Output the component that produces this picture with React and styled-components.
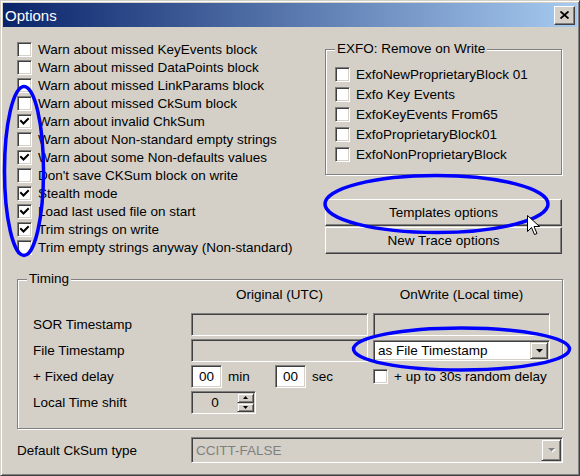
import React from 'react';
import styled, { createGlobalStyle } from 'styled-components';

const Global = createGlobalStyle`
  html, body { margin: 0; padding: 0; background: #d4d0c8; }
  body { font-family: "Liberation Sans", Arial, sans-serif; font-size: 13.5px; color: #000; }
  * { box-sizing: border-box; }
`;

const Window = styled.div`
  position: relative;
  width: 580px;
  height: 476px;
  background: #d4d0c8;
  border: 1px solid;
  border-color: #d4d0c8 #404040 #404040 #d4d0c8;
  box-shadow: inset 1px 1px 0 #fff, inset -1px -1px 0 #808080;
  padding: 2px;
  display: flex;
  flex-direction: column;
`;

const TitleBar = styled.div`
  height: 24px;
  flex: none;
  display: flex;
  align-items: center;
  justify-content: space-between;
  padding: 0 2px 0 2px;
  background: linear-gradient(to right, #0a246a, #a6caf0);
  color: #fff;
  font-size: 15px;
`;

const CloseButton = styled.div`
  width: 21px;
  height: 19px;
  background: #d4d0c8;
  border: 1px solid;
  border-color: #fff #404040 #404040 #fff;
  box-shadow: inset -1px -1px 0 #808080;
  display: flex;
  align-items: center;
  justify-content: center;
`;

const Client = styled.div`
  flex: 1;
  padding: 13px 14px 0 14px;
  display: flex;
  flex-direction: column;
`;

const TopSection = styled.div`
  display: grid;
  grid-template-columns: 308px 237px;
  align-items: start;
`;

const CheckList = styled.div`
  display: flex;
  flex-direction: column;
`;

const CheckRow = styled.label`
  height: ${p => p.$h}px;
  display: flex;
  align-items: center;
  gap: 6px;
  white-space: nowrap;
`;

const Box = styled.span`
  width: 15px;
  height: 15px;
  flex: none;
  border: 1px solid;
  border-color: #808080 #fff #fff #808080;
  box-shadow: inset 1px 1px 0 #404040, inset -1px -1px 0 #d4d0c8;
  background: #fff;
  display: flex;
  align-items: center;
  justify-content: center;
`;

const RightCol = styled.div`
  margin-top: 9px;
  display: flex;
  flex-direction: column;
`;

const GroupBox = styled.div`
  position: relative;
  border: 1px solid #808080;
  box-shadow: inset 1px 1px 0 #fff, 1px 1px 0 #fff;
  padding: ${p => p.$pad};
  margin-top: ${p => p.$mt || 0}px;
`;

const Legend = styled.span`
  position: absolute;
  top: -9px;
  left: ${p => p.$left}px;
  padding: 0 2px;
  line-height: 16px;
  background: #d4d0c8;
  white-space: nowrap;
`;

const ButtonStack = styled.div`
  margin-top: 24px;
  display: flex;
  flex-direction: column;
  gap: 1px;
`;

const Button = styled.div`
  height: 27px;
  background: #d4d0c8;
  border: 1px solid;
  border-color: #fff #404040 #404040 #fff;
  box-shadow: inset -1px -1px 0 #808080;
  display: flex;
  align-items: center;
  justify-content: center;
`;

const TimingGrid = styled.div`
  display: grid;
  grid-template-columns: 153px 177px 177px;
  grid-template-rows: 23px repeat(4, 23px);
  column-gap: 5px;
  row-gap: 3px;
  align-items: center;
`;

const ColHead = styled.div`
  align-self: start;
  line-height: 16px;
  text-align: center;
  grid-column: ${p => p.$col};
`;

const Label = styled.div`
  white-space: nowrap;
`;

const Field = styled.div`
  height: ${p => p.$h || 23}px;
  width: ${p => (p.$w ? `${p.$w}px` : 'auto')};
  flex: none;
  border: 1px solid;
  border-color: #808080 #fff #fff #808080;
  box-shadow: inset 1px 1px 0 #404040, inset -1px -1px 0 #d4d0c8;
  background: ${p => (p.$white ? '#fff' : '#d4d0c8')};
  display: flex;
  align-items: center;
  padding: 1px;
  color: ${p => (p.$disabled ? '#808080' : '#000')};
`;

const FieldText = styled.span`
  flex: 1;
  padding-left: ${p => (p.$center ? 0 : 3)}px;
  white-space: nowrap;
  text-align: ${p => (p.$center ? 'center' : 'left')};
`;

const DropButton = styled.div`
  width: ${p => p.$w}px;
  height: 100%;
  flex: none;
  background: #d4d0c8;
  border: 1px solid;
  border-color: #d4d0c8 #404040 #404040 #d4d0c8;
  box-shadow: inset 1px 1px 0 #fff, inset -1px -1px 0 #808080;
  display: flex;
  align-items: center;
  justify-content: center;
`;

const SpinButtons = styled.div`
  width: 17px;
  height: 100%;
  flex: none;
  display: flex;
  flex-direction: column;
`;

const SpinHalf = styled.div`
  flex: 1;
  background: #d4d0c8;
  border: 1px solid;
  border-color: #d4d0c8 #404040 #404040 #d4d0c8;
  box-shadow: inset 1px 1px 0 #fff, inset -1px -1px 0 #808080;
  display: flex;
  align-items: center;
  justify-content: center;
`;

const InlineRow = styled.div`
  display: flex;
  align-items: center;
  gap: 6px;
`;

const Unit = styled.span`
  width: 41px;
  flex: none;
`;

const DefaultRow = styled.div`
  margin-top: 8px;
  display: grid;
  grid-template-columns: 174px 1fr;
  align-items: center;
`;

const Overlay = styled.svg`
  position: absolute;
  top: -1px;
  left: -1px;
  width: 580px;
  height: 476px;
  pointer-events: none;
`;

const CheckMark = () => (
  <svg width="11" height="11" viewBox="0 0 11 11">
    <polyline points="2,5 4.5,7.5 9,3" fill="none" stroke="#000" strokeWidth="2" strokeLinecap="square" />
  </svg>
);

const Arrow = ({ color = '#000', shadow = false }) => (
  <svg width="9" height="6" viewBox="0 0 9 6">
    {shadow && <path d="M2 2 H9 L5.5 5.5 Z" fill="#fff" />}
    <path d="M1 1 H8 L4.5 4.5 Z" fill={color} />
  </svg>
);

const SmallArrow = ({ up }) => (
  <svg width="5" height="3" viewBox="0 0 5 3">
    {up ? <path d="M0 3 H5 L2.5 0 Z" fill="#000" /> : <path d="M0 0 H5 L2.5 3 Z" fill="#000" />}
  </svg>
);

const Check = ({ checked, h, children }) => (
  <CheckRow $h={h}>
    <Box>{checked && <CheckMark />}</Box>
    <span>{children}</span>
  </CheckRow>
);

const leftItems = [
  ['Warn about missed KeyEvents block', false],
  ['Warn about missed DataPoints block', false],
  ['Warn about missed LinkParams block', false],
  ['Warn about missed CkSum block', false],
  ['Warn about invalid ChkSum', true],
  ['Warn about Non-standard empty strings', false],
  ['Warn about some Non-defaults values', true],
  ["Don't save CKSum block on write", false],
  ['Stealth mode', true],
  ['Load last used file on start', true],
  ['Trim strings on write', true],
  ['Trim empty strings anyway (Non-standard)', false],
];

const exfoItems = [
  'ExfoNewProprietaryBlock 01',
  'Exfo Key Events',
  'ExfoKeyEvents From65',
  'ExfoProprietaryBlock01',
  'ExfoNonProprietaryBlock',
];

export default function App() {
  return (
    <>
      <Global />
      <Window>
        <TitleBar>
          <span>Options</span>
          <CloseButton>
            <svg width="9" height="8" viewBox="0 0 9 8">
              <path d="M0.5 0.5 L8.5 7.5 M8.5 0.5 L0.5 7.5" stroke="#000" strokeWidth="1.8" />
            </svg>
          </CloseButton>
        </TitleBar>
        <Client>
          <TopSection>
            <CheckList>
              {leftItems.map(([t, c]) => (
                <Check key={t} checked={c} h={18}>{t}</Check>
              ))}
            </CheckList>
            <RightCol>
              <GroupBox $pad="14px 8px 10px 9px">
                <Legend $left={9}>EXFO: Remove on Write</Legend>
                {exfoItems.map(t => (
                  <Check key={t} h={20}>{t}</Check>
                ))}
              </GroupBox>
              <ButtonStack>
                <Button>Templates options</Button>
                <Button>New Trace options</Button>
              </ButtonStack>
            </RightCol>
          </TopSection>

          <GroupBox $mt={23} $pad="7px 8px 14px 15px">
            <Legend $left={9}>Timing</Legend>
            <TimingGrid>
              <ColHead $col={2}>Original (UTC)</ColHead>
              <ColHead $col={3}>OnWrite (Local time)</ColHead>

              <Label>SOR Timestamp</Label>
              <Field />
              <Field />

              <Label>File Timestamp</Label>
              <Field />
              <Field $white $h={21}>
                <FieldText>as File Timestamp</FieldText>
                <DropButton $w={18}><Arrow /></DropButton>
              </Field>

              <Label>+ Fixed delay</Label>
              <InlineRow>
                <Field $white $w={31}><FieldText $center>00</FieldText></Field>
                <Unit>min</Unit>
                <Field $white $w={31}><FieldText $center>00</FieldText></Field>
                <Unit>sec</Unit>
              </InlineRow>
              <Check h={23}>+ up to 30s random delay</Check>

              <Label>Local Time shift</Label>
              <InlineRow>
                <Field $w={65}>
                  <FieldText $center>0</FieldText>
                  <SpinButtons>
                    <SpinHalf><SmallArrow up /></SpinHalf>
                    <SpinHalf><SmallArrow /></SpinHalf>
                  </SpinButtons>
                </Field>
              </InlineRow>
              <div />
            </TimingGrid>
          </GroupBox>

          <DefaultRow>
            <Label>Default CkSum type</Label>
            <Field $h={26} $disabled>
              <FieldText>CCITT-FALSE</FieldText>
              <DropButton $w={20}><Arrow color="#808080" shadow /></DropButton>
            </Field>
          </DefaultRow>
        </Client>

        <Overlay viewBox="0 0 580 476">
          <ellipse cx="24" cy="171" rx="19.5" ry="84.5" fill="none" stroke="#0000ff" strokeWidth="3.5" />
          <ellipse cx="436.5" cy="204" rx="111.5" ry="28.5" fill="none" stroke="#0000ff" strokeWidth="3.5" />
          <ellipse cx="461.5" cy="349" rx="108" ry="21" fill="none" stroke="#0000ff" strokeWidth="3.5" />
          <path
            d="M527.5 215.5 L527.5 231.5 L531.5 227.5 L534.5 234.5 L537 233.5 L534 226.5 L539.5 226.5 Z"
            fill="#fff"
            stroke="#000"
            strokeWidth="1"
          />
        </Overlay>
      </Window>
    </>
  );
}
